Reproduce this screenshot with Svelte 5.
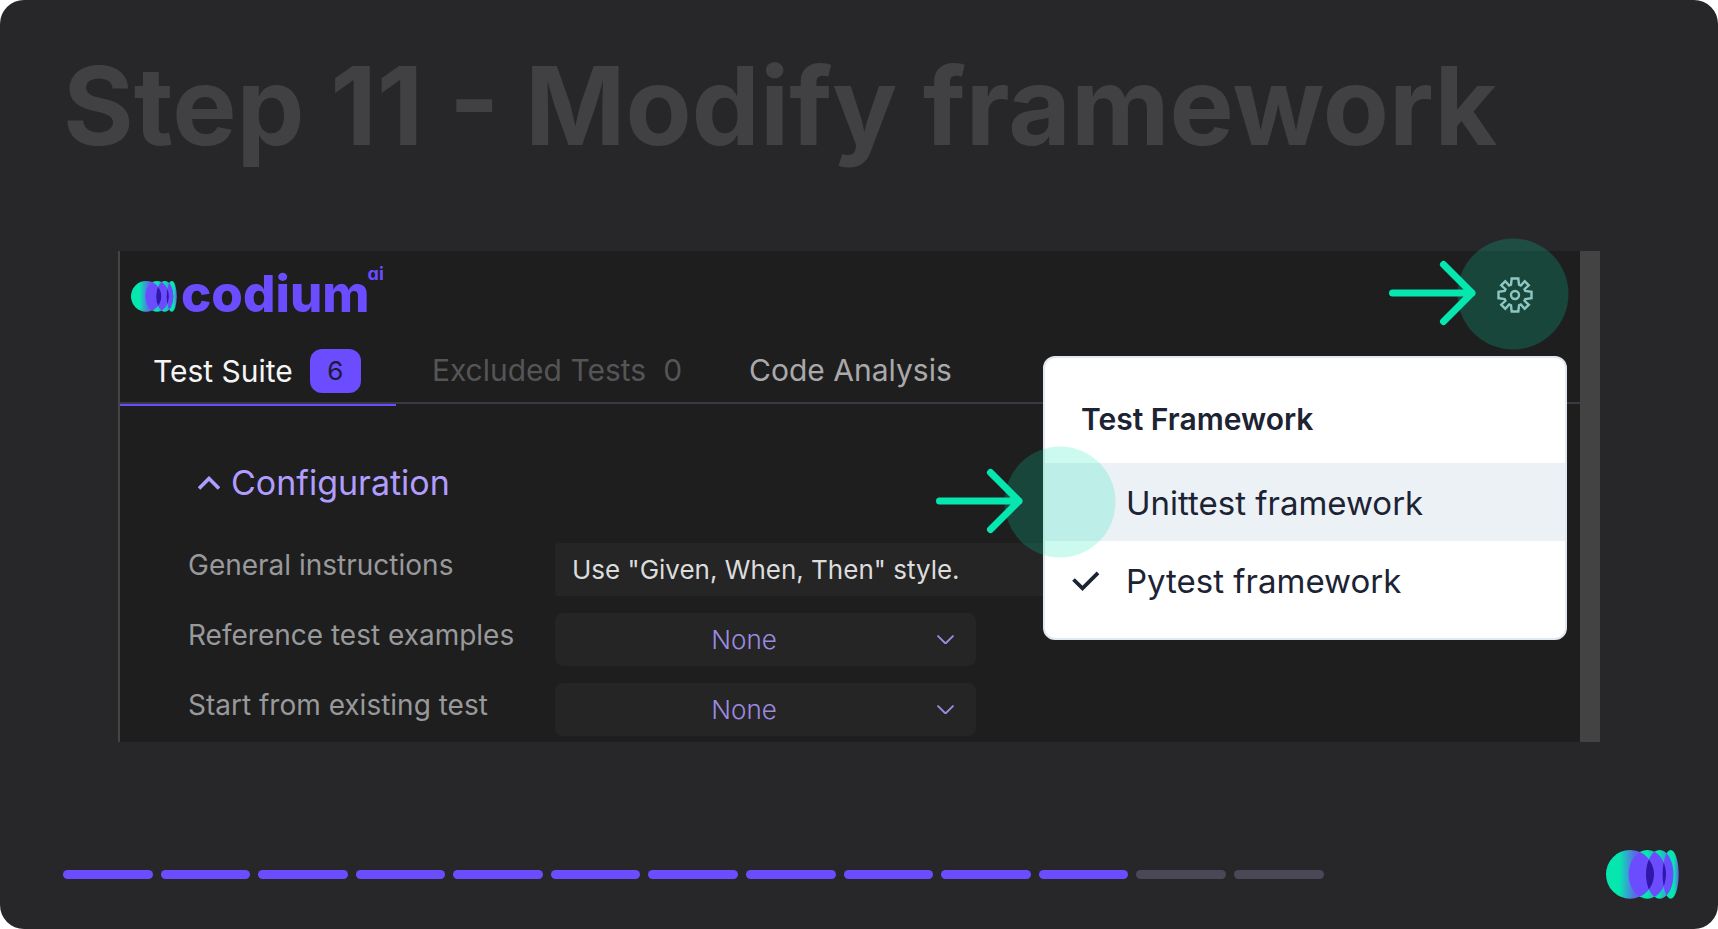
<script>
  const steps = 13;
  let current = $state(11);
  let framework = $state('Pytest framework');
  const frameworks = ['Unittest framework', 'Pytest framework'];
  const highlighted = 'Unittest framework';
  let instructions = $state('Use "Given, When, Then" style.');
</script>

{#snippet mark(id)}
  <svg class="mark" viewBox="0 0 219 147" aria-hidden="true">
    <defs>
      <linearGradient id="{id}-g1"><stop offset="0.28" stop-color="#06e7b0" /><stop offset="0.6" stop-color="#5a6ae8" /></linearGradient>
      <linearGradient id="{id}-g2"><stop offset="0.5" stop-color="#06e7b0" /><stop offset="0.85" stop-color="#4a83dc" /></linearGradient>
      <linearGradient id="{id}-g3"><stop offset="0.45" stop-color="#06e7b0" /><stop offset="0.9" stop-color="#4a83dc" /></linearGradient>
      <linearGradient id="{id}-g4"><stop offset="0.7" stop-color="#06e7b0" /><stop offset="1" stop-color="#5a6ae8" /></linearGradient>
      <clipPath id="{id}-c1"><ellipse cx="72" cy="73" rx="72" ry="73" /></clipPath>
      <clipPath id="{id}-c2"><ellipse cx="124" cy="73" rx="56" ry="73" /></clipPath>
      <clipPath id="{id}-c3"><ellipse cx="161" cy="73" rx="41" ry="73" /></clipPath>
    </defs>
    <ellipse cx="194" cy="73" rx="24" ry="73" fill="url(#{id}-g4)" />
    <ellipse cx="161" cy="73" rx="41" ry="73" fill="url(#{id}-g3)" />
    <ellipse cx="124" cy="73" rx="56" ry="73" fill="url(#{id}-g2)" />
    <ellipse cx="72" cy="73" rx="72" ry="73" fill="url(#{id}-g1)" />
    <g fill="#6b4cff">
      <ellipse cx="124" cy="73" rx="56" ry="73" clip-path="url(#{id}-c1)" />
      <ellipse cx="161" cy="73" rx="41" ry="73" clip-path="url(#{id}-c2)" />
      <ellipse cx="194" cy="73" rx="24" ry="73" clip-path="url(#{id}-c3)" />
    </g>
    <g fill="#2f17a8">
      <ellipse cx="161" cy="73" rx="41" ry="73" clip-path="url(#{id}-c1)" />
      <ellipse cx="194" cy="73" rx="24" ry="73" clip-path="url(#{id}-c2)" />
    </g>
  </svg>
{/snippet}

{#snippet pointer()}
  <svg class="pointer" viewBox="0 0 180 112" aria-hidden="true">
    <circle cx="124" cy="56" r="55.5" fill="#06e7b0" fill-opacity="0.2" />
    <path d="M3.500 55H83M54.500 26.500 83 55 54.500 83.500" fill="none" stroke="#06e7b0" stroke-width="7" stroke-linecap="round" stroke-linejoin="round" />
  </svg>
{/snippet}

{#snippet picker(id, label)}
  <label for={id}>{label}</label>
  <div class="select">
    <select {id}><option>None</option></select>
    <svg viewBox="0 0 16 9" aria-hidden="true"><path d="M1 1l7 7 7-7" fill="none" stroke="#9d8be0" stroke-width="1.800" stroke-linecap="round" stroke-linejoin="round" /></svg>
  </div>
{/snippet}

<main class="slide">
  <h1>Step 11 - Modify framework</h1>

  <section class="panel">
    <header>
      <a class="brand" href="#top" aria-label="codium ai">
        {@render mark('brand')}
        <span class="word">codium</span><span class="ai">ai</span>
      </a>
      <div class="settings">
        <button class="gear" aria-label="Settings">
          <svg viewBox="-18 -18 36 36" aria-hidden="true">
            <g fill="none" stroke="#b0c0c8" stroke-width="2.400">
              <path d="M-3.300-16.500H3.300L4-10.300 5.800-9.500 9.700-13.800 13.800-9.700 9.500-5.800 10.300-4 16.500-3.300V3.300L10.300 4 9.500 5.800 13.800 9.700 9.700 13.800 5.800 9.500 4 10.300 3.300 16.500H-3.300L-4 10.300-5.800 9.500-9.700 13.800-13.800 9.700-9.500 5.800-10.300 4-16.500 3.300V-3.300L-10.300-4-9.500-5.800-13.800-9.700-9.700-13.800-5.800-9.500-4-10.300Z" />
              <circle r="4" />
            </g>
          </svg>
        </button>
        {@render pointer()}
      </div>
    </header>

    <nav>
      <button class="tab active">Test Suite <span class="badge">6</span></button>
      <button class="tab muted">Excluded Tests <span>0</span></button>
      <button class="tab">Code Analysis</button>
    </nav>

    <div class="config">
      <h2>
        <button>
          <svg viewBox="0 0 22 14" aria-hidden="true"><path d="M1 12.500l10-10 10 10" fill="none" stroke="#b19dff" stroke-width="3.600" /></svg>
          Configuration
        </button>
      </h2>
      <div class="fields">
        <label for="general">General instructions</label>
        <input id="general" type="text" bind:value={instructions} />
        {@render picker('reference', 'Reference test examples')}
        {@render picker('existing', 'Start from existing test')}
      </div>
    </div>

    <div class="menu">
      <h3>Test Framework</h3>
      {#each frameworks as name}
        <div class="item" class:highlighted={name === highlighted}>
          <button onclick={() => (framework = name)}>
            <span class="check">
              {#if name === framework}
                <svg viewBox="0 0 28 20" aria-hidden="true"><path d="M1.500 8.500 10.500 17.300 26 1.800" fill="none" stroke="#1c2333" stroke-width="3.800" /></svg>
              {/if}
            </span>
            {name}
          </button>
          {#if name === highlighted}{@render pointer()}{/if}
        </div>
      {/each}
    </div>
  </section>

  <footer>
    <div class="progress">
      {#each Array(steps) as _, i}
        <span class:done={i < current}></span>
      {/each}
    </div>
    {@render mark('corner')}
  </footer>
</main>

<style>
  :global(body) {
    background: #fff;
  }
  .slide {
    box-sizing: border-box;
    min-height: 100vh;
    display: flex;
    flex-direction: column;
    padding: 40px 39px 30px 63px;
    border-radius: 24px;
    background: #272729;
    font-family: Inter, sans-serif;
    color: #a9a9ac;
  }
  h1, h2, h3 {
    margin: 0;
  }
  button {
    padding: 0;
    border: 0;
    background: none;
    color: inherit;
    font: inherit;
    cursor: pointer;
  }
  svg {
    display: block;
  }
  h1 {
    font-size: 108px;
    line-height: 132px;
    font-weight: 700;
    color: #414143;
    white-space: nowrap;
  }
  .panel {
    position: relative;
    margin: 79px 79px 0 55px;
    border-left: 2px solid #444;
    border-right: 20px solid #434343;
    background: #1e1e1e;
  }
  header {
    display: flex;
    justify-content: space-between;
    height: 86px;
    padding: 0 47px 0 11px;
  }
  .brand {
    display: flex;
    align-items: flex-start;
    gap: 4px;
    color: #6b4cff;
    font-weight: 700;
    text-decoration: none;
    font-feature-settings: 'cv11';
  }
  .brand .mark {
    width: 46px;
    margin-top: 30px;
  }
  .word {
    font-size: 51px;
    font-weight: 800;
    line-height: 86px;
  }
  .ai {
    margin-left: -6px;
    font-size: 18px;
    line-height: 46px;
  }
  .settings, .item {
    position: relative;
  }
  .gear {
    margin-top: 26px;
  }
  .gear svg {
    width: 36px;
  }
  .pointer {
    position: absolute;
    width: 180px;
    pointer-events: none;
  }
  .settings .pointer {
    top: -13px;
    right: -36px;
  }
  .item .pointer {
    top: -17px;
    left: -109px;
  }
  nav {
    display: flex;
    gap: 36px;
    border-bottom: 2px solid #3c3740;
  }
  .tab {
    display: flex;
    align-items: center;
    gap: 17px;
    box-sizing: border-box;
    height: 65px;
    font-size: 30px;
  }
  .tab.active {
    height: 69px;
    margin-bottom: -4px;
    padding: 0 35px 0 33px;
    border-bottom: 2px solid #6b4cff;
    color: #f5f5f5;
  }
  .tab.muted {
    color: #555557;
    margin-right: 31px;
  }
  .badge {
    width: 51px;
    border-radius: 12px;
    background: #6b4cff;
    color: #1d1b33;
    font-size: 26px;
    line-height: 44px;
  }
  .config {
    padding: 55px 68px 6px;
  }
  h2 {
    font-size: 34px;
    line-height: 48px;
    font-weight: 400;
    color: #b19dff;
    padding: 0 10px;
  }
  h2 button {
    display: flex;
    align-items: center;
    gap: 11px;
  }
  h2 svg {
    width: 22px;
  }
  .fields {
    display: grid;
    grid-template-columns: 367px 1fr;
    gap: 17px 0;
    margin-top: 36px;
  }
  label {
    font-size: 28px;
    line-height: 44px;
    color: #99999c;
    white-space: nowrap;
  }
  input, select {
    box-sizing: border-box;
    height: 53px;
    border: 0;
    background: #252525;
    font-family: inherit;
    font-size: 26px;
  }
  input {
    width: 560px;
    padding: 0 17px;
    border-radius: 4px;
    color: #dcdcdc;
  }
  .select {
    display: grid;
    width: 421px;
    align-items: center;
  }
  select {
    grid-area: 1 / 1;
    appearance: none;
    padding: 0 43px 0 0;
    border-radius: 8px;
    color: #9d8be0;
    font-weight: 300;
    text-align: center;
    text-align-last: center;
  }
  .select svg {
    grid-area: 1 / 1;
    justify-self: end;
    width: 17px;
    margin-right: 22px;
    pointer-events: none;
  }
  .menu {
    position: absolute;
    top: 105px;
    right: 13px;
    box-sizing: border-box;
    width: 524px;
    padding: 39px 0 19px;
    border: 2px solid #e2e8f0;
    border-radius: 12px;
    background: #fff;
    color: #1c2333;
  }
  h3 {
    padding: 0 36px 22px;
    font-size: 30px;
    line-height: 44px;
    font-weight: 600;
  }
  .item button {
    display: flex;
    align-items: center;
    width: 100%;
    height: 78px;
    padding: 2px 0 0 27px;
    font-size: 33px;
  }
  .highlighted button {
    background: #ecf1f6;
  }
  .check {
    width: 54px;
  }
  .check svg {
    width: 28px;
  }
  footer {
    display: flex;
    align-items: center;
    justify-content: space-between;
    margin-top: auto;
  }
  .progress {
    display: flex;
    gap: 8px;
    width: 78%;
  }
  .progress span {
    flex: 1;
    height: 9px;
    border-radius: 5px;
    background: #4a4857;
  }
  .progress .done {
    background: #6b4cff;
  }
  footer .mark {
    width: 73px;
  }
</style>
